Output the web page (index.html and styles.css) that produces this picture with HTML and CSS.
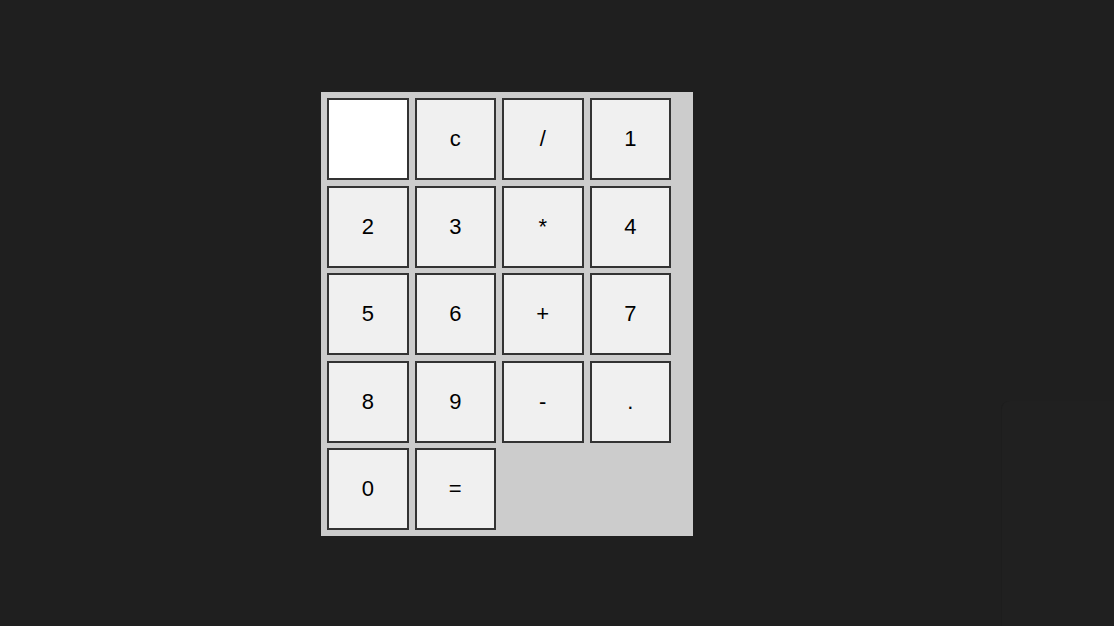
FILE: index.html
```html
<!DOCTYPE html>
<html>
<head>
<meta charset="utf-8">
<link rel="stylesheet" href="styles.css">
</head>
<body>
<div class="page">
  <div class="calculator">
    <input class="display" type="text">
    <button class="key">c</button>
    <button class="key">/</button>
    <button class="key">1</button>
    <button class="key">2</button>
    <button class="key">3</button>
    <button class="key">*</button>
    <button class="key">4</button>
    <button class="key">5</button>
    <button class="key">6</button>
    <button class="key">+</button>
    <button class="key">7</button>
    <button class="key">8</button>
    <button class="key">9</button>
    <button class="key">-</button>
    <button class="key">.</button>
    <button class="key">0</button>
    <button class="key">=</button>
  </div>
</div>
<div class="ghost-panel"></div>
</body>
</html>
```
FILE: styles.css
```css
html, body {
  margin: 0;
  padding: 0;
  background: #1f1f1f;
  height: 100%;
  overflow: hidden;
}
.page {
  padding-top: 92px;
  padding-left: 320.5px;
}
.calculator {
  box-sizing: border-box;
  width: 372px;
  height: 444px;
  background: #cccccc;
  padding: 6px 6px 6px 6.5px;
  display: grid;
  grid-template-columns: repeat(4, 81.5px);
  grid-auto-rows: 82px;
  column-gap: 6px;
  row-gap: 5.5px;
}
.display, .key {
  box-sizing: border-box;
  width: 81.5px;
  height: 82px;
  margin: 0;
  border: 2px solid #333333;
  border-radius: 0;
  padding: 0;
  font-family: "Liberation Sans", Arial, sans-serif;
  font-size: 22px;
  color: #000;
}
.display {
  background: #ffffff;
  outline: none;
}
.key {
  background: #f0f0f0;
  text-align: center;
}
.ghost-panel {
  position: absolute;
  left: 1002px;
  top: 401px;
  width: 120px;
  height: 240px;
  background: #202020;
  border-top-left-radius: 8px;
  box-shadow: -1px 0 0 #1d1d1d;
}
```
